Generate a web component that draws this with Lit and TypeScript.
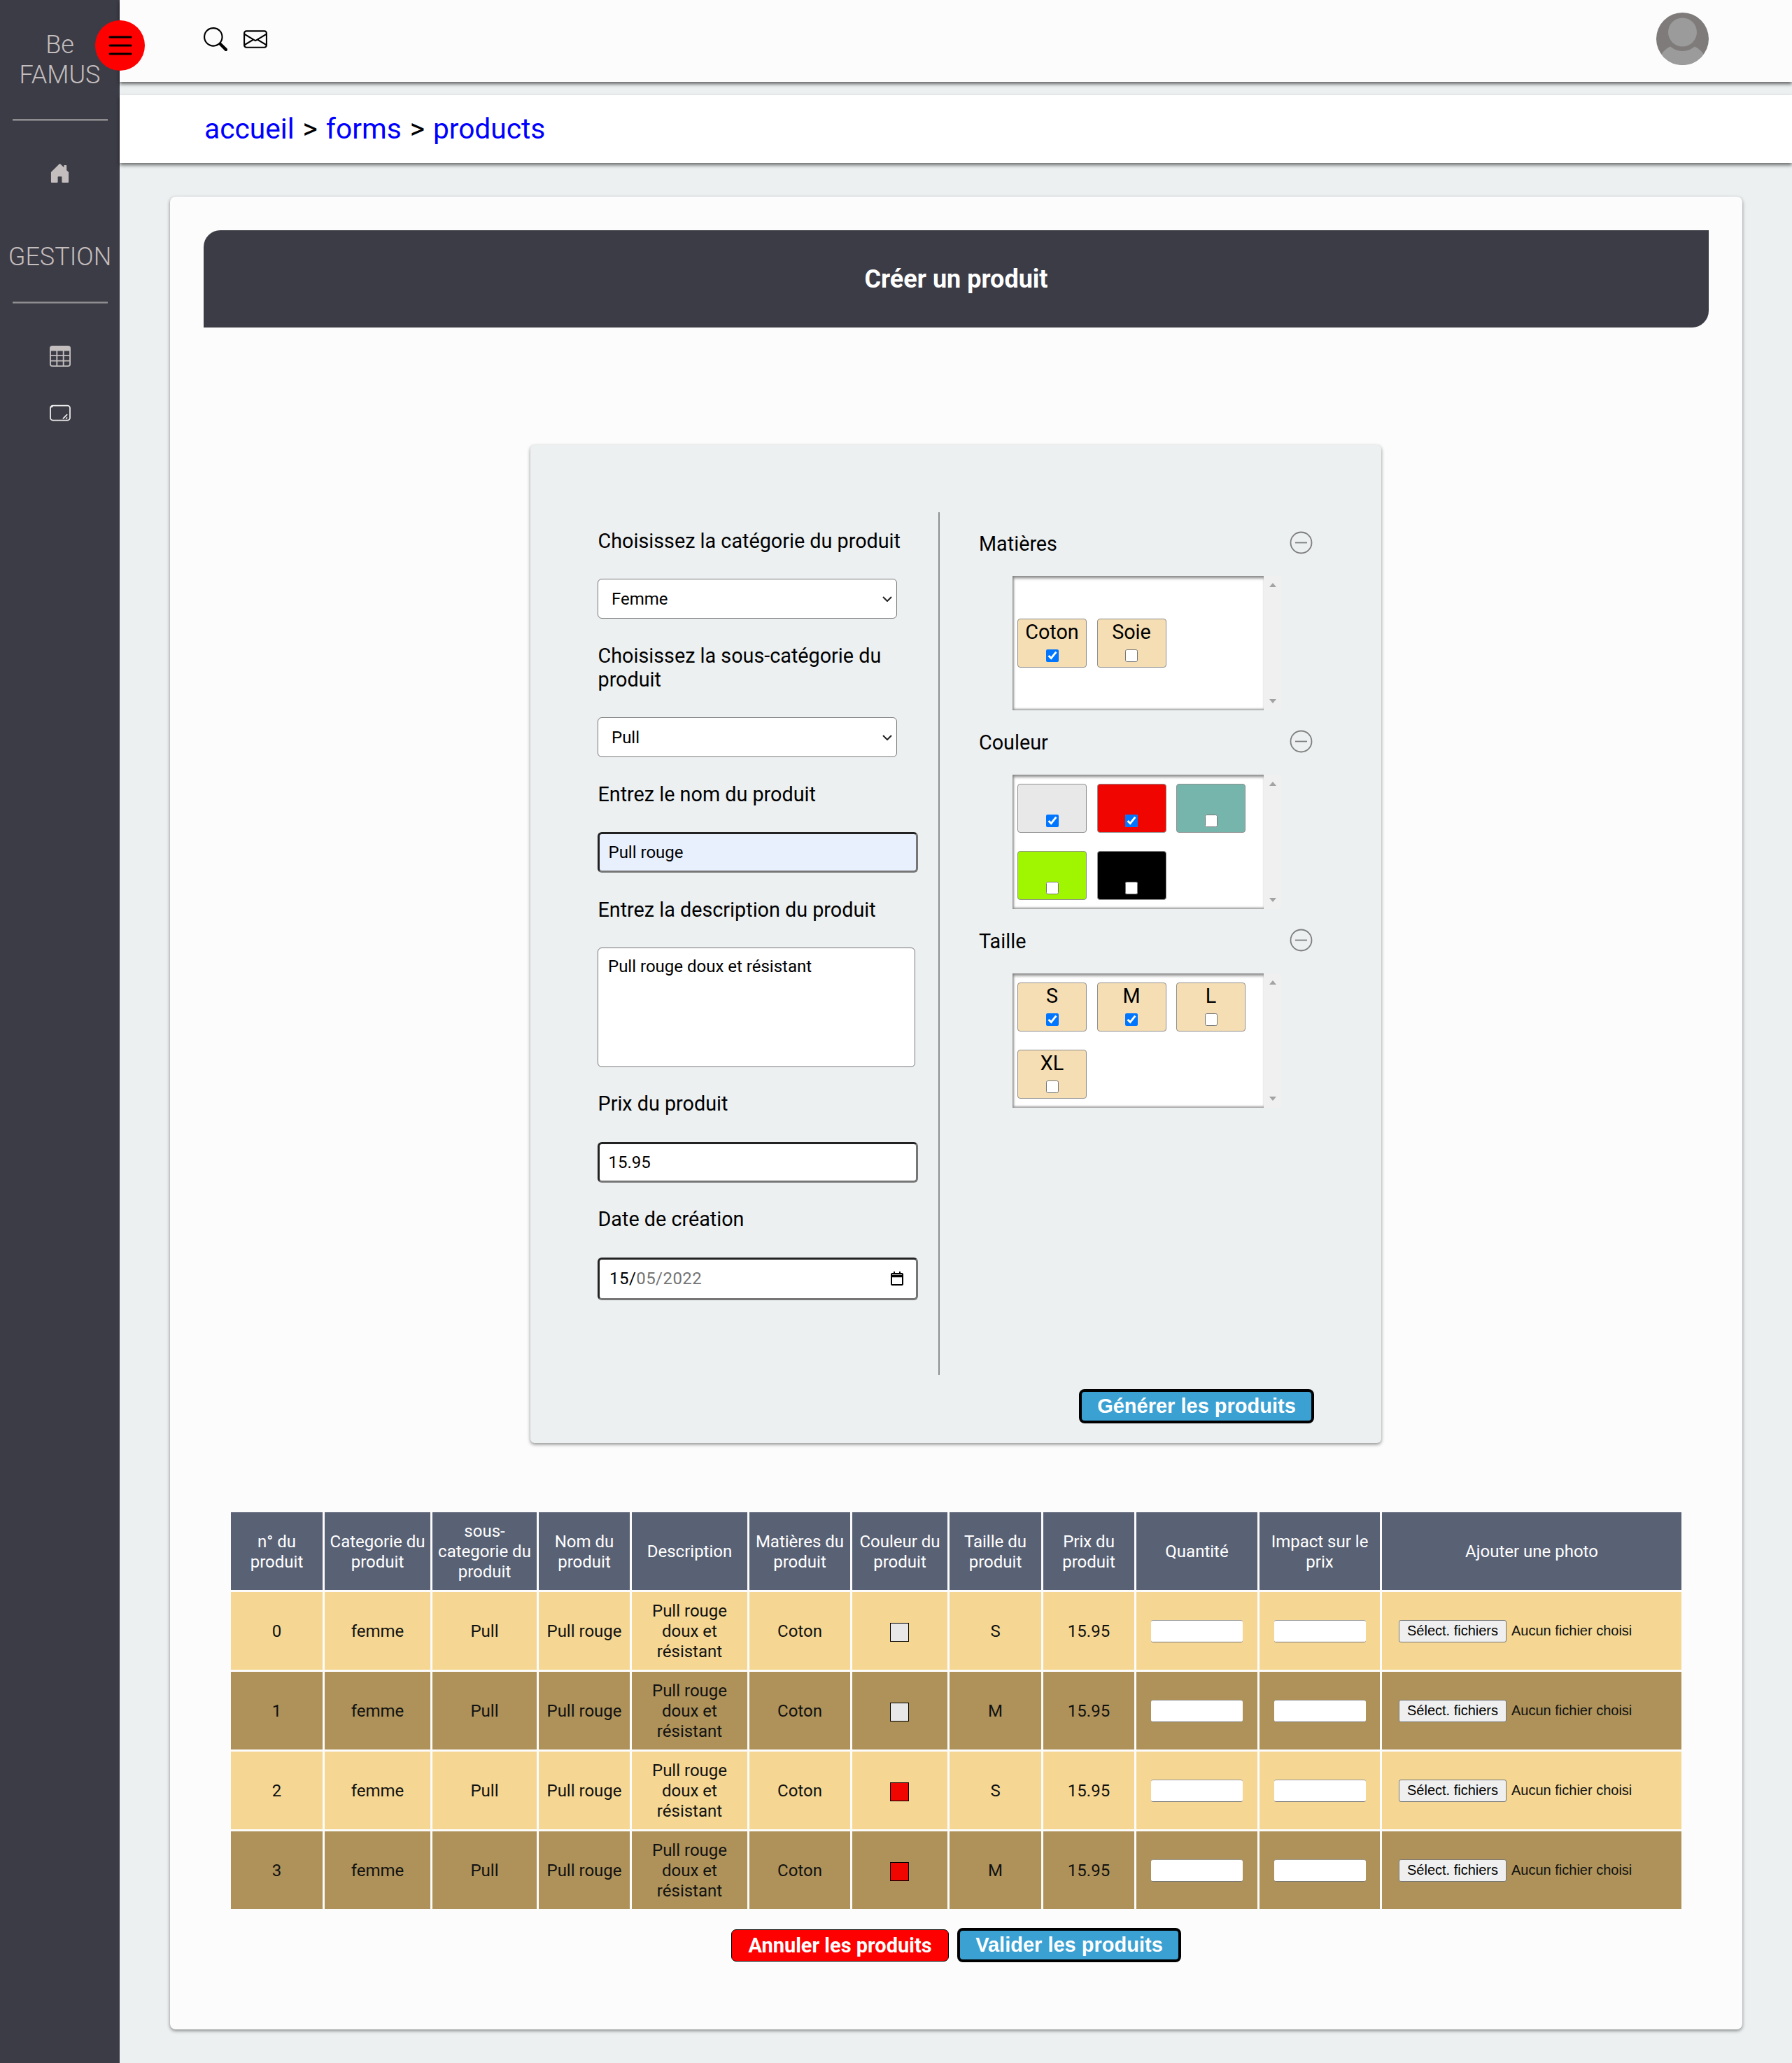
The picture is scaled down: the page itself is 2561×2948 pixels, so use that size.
import { LitElement, html, css, svg } from 'lit';
import { customElement } from 'lit/decorators.js';

interface Tile {
  label?: string;
  color?: string;
  checked?: boolean;
}

const MATIERES: Tile[] = [{ label: 'Coton', checked: true }, { label: 'Soie' }];
const COULEURS: Tile[] = [
  { color: '#e8e8e8', checked: true },
  { color: '#f00500', checked: true },
  { color: '#76b5ac' },
  { color: '#a0f500' },
  { color: '#000000' },
];
const TAILLES: Tile[] = [
  { label: 'S', checked: true },
  { label: 'M', checked: true },
  { label: 'L' },
  { label: 'XL' },
];

const ROWS = [
  { n: 0, color: '#e8e8e8', size: 'S' },
  { n: 1, color: '#e8e8e8', size: 'M' },
  { n: 2, color: '#f00500', size: 'S' },
  { n: 3, color: '#f00500', size: 'M' },
];

const HEADERS = [
  'n° du produit',
  'Categorie du produit',
  'sous-categorie du produit',
  'Nom du produit',
  'Description',
  'Matières du produit',
  'Couleur du produit',
  'Taille du produit',
  'Prix du produit',
  'Quantité',
  'Impact sur le prix',
  'Ajouter une photo',
];

const icon = (path: ReturnType<typeof svg>, w: number, h: number, box = '0 0 16 16') => html`
  <svg width=${w} height=${h} viewBox=${box} fill="currentColor">${path}</svg>
`;

const SEARCH = svg`<path d="M11.742 10.344a6.5 6.5 0 1 0-1.397 1.398h-.001c.03.04.062.078.098.115l3.85 3.85a1 1 0 0 0 1.415-1.414l-3.85-3.85a1.007 1.007 0 0 0-.115-.1zM12 6.5a5.5 5.5 0 1 1-11 0 5.5 5.5 0 0 1 11 0z"/>`;
const ENVELOPE = svg`<path d="M0 4a2 2 0 0 1 2-2h12a2 2 0 0 1 2 2v8a2 2 0 0 1-2 2H2a2 2 0 0 1-2-2V4Zm2-1a1 1 0 0 0-1 1v.217l7 4.2 7-4.2V4a1 1 0 0 0-1-1H2Zm13 2.383-4.708 2.825L15 11.105V5.383Zm-.034 6.876-5.64-3.471L8 9.583l-1.326-.795-5.64 3.47A1 1 0 0 0 2 13h12a1 1 0 0 0 .966-.741ZM1 11.105l4.708-2.897L1 5.383v5.722Z"/>`;
const LIST = svg`<path d="M2.5 12a.5.5 0 0 1 .5-.5h10a.5.5 0 0 1 0 1H3a.5.5 0 0 1-.5-.5zm0-4a.5.5 0 0 1 .5-.5h10a.5.5 0 0 1 0 1H3a.5.5 0 0 1-.5-.5zm0-4a.5.5 0 0 1 .5-.5h10a.5.5 0 0 1 0 1H3a.5.5 0 0 1-.5-.5z"/>`;
const HOUSE = svg`<path d="M6.5 14.5v-3.505c0-.245.25-.495.5-.495h2c.25 0 .5.25.5.5v3.5a.5.5 0 0 0 .5.5h4a.5.5 0 0 0 .5-.5v-7a.5.5 0 0 0-.146-.354L13 5.793V2.5a.5.5 0 0 0-.5-.5h-1a.5.5 0 0 0-.5.5v1.293L8.354 1.146a.5.5 0 0 0-.708 0l-6 6A.5.5 0 0 0 1.5 7.5v7a.5.5 0 0 0 .5.5h4a.5.5 0 0 0 .5-.5z"/>`;
const TABLE = svg`<path d="M0 2a2 2 0 0 1 2-2h12a2 2 0 0 1 2 2v12a2 2 0 0 1-2 2H2a2 2 0 0 1-2-2V2zm15 2h-4v3h4V4zm0 4h-4v3h4V8zm0 4h-4v3h3a1 1 0 0 0 1-1v-2zm-5 3v-3H6v3h4zm-5 0v-3H1v2a1 1 0 0 0 1 1h3zm-4-4h4V8H1v3zm0-4h4V4H1v3zm5-3v3h4V4H6zm4 4H6v3h4V8z"/>`;
const RESIZE = svg`<path d="M.5 4A2.5 2.5 0 0 1 3 1.5h12A2.5 2.5 0 0 1 17.5 4v8a2.5 2.5 0 0 1-2.5 2.5H3A2.5 2.5 0 0 1 .5 12V4zm2.5-.5A1.5 1.5 0 0 0 1.5 4v8A1.5 1.5 0 0 0 3 13.5h12a1.5 1.5 0 0 0 1.5-1.5V4A1.5 1.5 0 0 0 15 2.5H3zm11.854 5.646a.5.5 0 0 1 0 .708l-3 3a.5.5 0 0 1-.708-.708l3-3a.5.5 0 0 1 .708 0zm0 2.5a.5.5 0 0 1 0 .708l-.5.5a.5.5 0 0 1-.708-.708l.5-.5a.5.5 0 0 1 .708 0z"/>`;

@customElement('app-root')
export class AppRoot extends LitElement {
  static styles = css`
    :host {
      display: block;
      min-height: 2948px;
      background: #ecf0f1;
      font-family: Roboto, sans-serif;
      color: #000;
    }

    .page {
      display: grid;
      grid-template-columns: 171px 1fr;
      min-height: 2948px;
      position: relative;
    }

    /* sidebar */
    .sidebar {
      background: #3c3c46;
      color: #c4bebe;
      display: flex;
      flex-direction: column;
      align-items: center;
      font-weight: 300;
      font-size: 36px;
      line-height: 43px;
      text-align: center;
    }
    .brand {
      margin-top: 43px;
    }
    .sidebar hr {
      width: 136px;
      height: 0;
      margin: 0;
      border: 0;
      border-top: 2px solid #8f8d8f;
      border-bottom: 1px solid #6b6a70;
    }
    .hr-top {
      margin-top: 41px !important;
    }
    .home {
      margin-top: 56.5px;
      height: 31px;
    }
    .gestion {
      margin-top: 85px;
    }
    .hr-bottom {
      margin-top: 42px !important;
    }
    .grid-icon {
      margin-top: 57px;
      height: 30px;
    }
    .resize-icon {
      margin-top: 50px;
      color: #efefef;
    }

    .burger {
      position: absolute;
      left: 136px;
      top: 29px;
      width: 71px;
      height: 72px;
      border-radius: 50%;
      background: #ff0000;
      display: flex;
      align-items: center;
      justify-content: center;
      color: #000;
      z-index: 2;
    }

    /* top bars */
    .topbar {
      height: 117px;
      background: #fcfcfc;
      box-shadow: 0 3px 5px rgba(0, 0, 0, 0.6);
      display: flex;
      align-items: center;
      padding: 0 119px 0 120px;
      position: relative;
    }
    .topbar .tools {
      display: flex;
      align-items: center;
      gap: 23px;
      margin-top: -5px;
      flex: 1;
    }
    .topbar svg {
      display: block;
    }
    .avatar {
      width: 75px;
      height: 75px;
      margin-top: -7px;
    }
    .crumbs {
      margin-top: 19px;
      height: 97px;
      background: #fff;
      box-shadow: 0 3px 5px rgba(0, 0, 0, 0.55);
      display: flex;
      align-items: center;
      gap: 12px;
      padding-left: 121px;
      font-size: 40.7px;
      padding-bottom: 2px;
      box-sizing: border-box;
    }
    .crumbs a {
      color: #0000ff;
      text-decoration: none;
    }

    /* card */
    .card {
      margin: 48px 71px 48px 72px;
      height: 2619px;
      box-sizing: border-box;
      background: #fcfcfc;
      border-radius: 8px;
      box-shadow: 0 2px 5px rgba(0, 0, 0, 0.45);
      padding: 48px 48px 0;
    }
    .title {
      height: 139px;
      background: #3c3c46;
      border-radius: 24px 0 24px 0;
      color: #fff;
      font-size: 36px;
      font-weight: 700;
      display: flex;
      align-items: center;
      justify-content: center;
    }

    /* form panel */
    .panel {
      width: 1216px;
      height: 1426px;
      margin: 168px 0 0 467px;
      background: #ecf0f1;
      border-radius: 6px;
      box-shadow: 0 2px 5px rgba(0, 0, 0, 0.45);
      padding-top: 96px;
      box-sizing: border-box;
    }
    .columns {
      display: grid;
      grid-template-columns: 584.5px 1fr;
      height: 1233px;
    }
    .left {
      border-right: 2px solid #8d8f90;
      padding: 24.5px 0 0 96px;
      display: flex;
      flex-direction: column;
      align-items: flex-start;
      gap: 36.7px;
      box-sizing: border-box;
    }
    .label {
      font-size: 28.75px;
      line-height: 33.6px;
      width: 458px;
      padding-left: 0.5px;
    }
    .select-wrap {
      position: relative;
      width: 428px;
      height: 57.5px;
    }
    .select-wrap svg {
      position: absolute;
      right: 7px;
      top: 25px;
      pointer-events: none;
    }
    select {
      appearance: none;
      display: block;
      width: 100%;
      height: 100%;
      box-sizing: border-box;
      border: 1px solid #767676;
      border-radius: 6px;
      background-color: #fff;
      font: 24px Roboto, sans-serif;
      color: #000;
      padding-left: 19px;
    }
    .field {
      width: 458px;
      height: 58px;
      box-sizing: border-box;
      border: 3px solid;
      border-color: #222 #767676 #767676 #222;
      border-radius: 6px;
      background: #fff;
      font: 24px Roboto, sans-serif;
      color: #000;
      padding: 0 12.5px;
    }
    .field.filled {
      background: #e8f0fe;
    }
    textarea {
      width: 454px;
      height: 170.5px;
      box-sizing: border-box;
      border: 1px solid #767676;
      border-radius: 6px;
      background: #fff;
      font: 24px Roboto, sans-serif;
      color: #000;
      padding: 12px 14px;
      resize: none;
      display: block;
    }
    .date {
      height: 61.5px;
      display: flex;
      align-items: center;
      justify-content: space-between;
      padding: 0 18px 0 14px;
      letter-spacing: 0.45px;
    }
    .date .muted {
      color: #757575;
    }

    .right {
      padding: 27px 0 0 56.5px;
      display: flex;
      flex-direction: column;
      gap: 28.5px;
    }
    .group-head {
      width: 477px;
      height: 34px;
      display: flex;
      align-items: center;
      justify-content: space-between;
      font-size: 28.75px;
    }
    .group-head span {
      padding-top: 2px;
    }
    .group-head svg {
      display: block;
      margin-top: -2px;
    }
    .group-body {
      display: flex;
      width: 384px;
      height: 191.5px;
      margin: 30px 0 0 48px;
    }
    .choices {
      width: 359px;
      box-sizing: border-box;
      background: #fff;
      box-shadow: inset 0 5px 4px -2px #808080, inset 4px 0 3px -2px #909090, inset 0 -4px 3px -2px #a0a0a0;
      display: flex;
      flex-wrap: wrap;
      align-content: space-around;
      column-gap: 14.5px;
      padding: 0 7px;
    }
    .tile {
      width: 99px;
      height: 70px;
      box-sizing: border-box;
      background: #f5deb3;
      border: 1px solid #8f8f8f;
      border-radius: 4px;
      font-size: 28.75px;
      display: flex;
      flex-direction: column;
      align-items: center;
      position: relative;
      line-height: 36px;
    }
    .tile input {
      width: 18px;
      height: 18px;
      margin: 0;
      position: absolute;
      top: 43px;
      left: 50%;
      transform: translateX(-50%);
    }
    .scroll {
      width: 25px;
      background: #f0f0f0;
      display: flex;
      flex-direction: column;
      justify-content: space-between;
      align-items: center;
      padding: 10px 0;
      box-sizing: border-box;
    }
    .arrow {
      width: 0;
      height: 0;
      border-left: 5.5px solid transparent;
      border-right: 5.5px solid transparent;
    }
    .arrow.up {
      border-bottom: 6px solid #a3a3a3;
    }
    .arrow.down {
      border-top: 6px solid #a3a3a3;
    }

    .blue-btn,
    .red-btn {
      box-sizing: border-box;
      font: 700 29px 'Liberation Sans', Arial, sans-serif;
      color: #fff;
      background: #3ba1d3;
      border: 4px solid #000;
      border-radius: 8px;
      padding: 0;
      display: block;
    }
    .red-btn {
      font-family: Roboto, sans-serif;
      background: #ff0000;
      border-width: 1.5px;
      border-radius: 7px;
    }
    .generate {
      width: 336px;
      height: 49px;
      margin: 20px 96px 0 auto;
    }

    /* products table */
    table {
      border-collapse: separate;
      border-spacing: 3px;
      table-layout: fixed;
      width: 2079px;
      margin: 96px 0 0 36px;
      font-size: 24px;
      line-height: 29px;
    }
    col:nth-child(1) { width: 131px; }
    col:nth-child(2) { width: 151px; }
    col:nth-child(3) { width: 149px; }
    col:nth-child(4) { width: 130px; }
    col:nth-child(5) { width: 165px; }
    col:nth-child(6) { width: 144px; }
    col:nth-child(7) { width: 136px; }
    col:nth-child(8) { width: 131px; }
    col:nth-child(9) { width: 130px; }
    col:nth-child(10) { width: 173px; }
    col:nth-child(11) { width: 172px; }
    col:nth-child(12) { width: 428px; }
    tr {
      height: 111px;
    }
    th {
      background: #596175;
      color: #fff;
      font-weight: 400;
      padding: 2px 5px 0;
    }
    td {
      padding: 2px 5px 0;
      text-align: center;
      background: #f5d793;
      color: #111;
    }
    tr:nth-child(even) td {
      background: #ae9259;
    }
    .swatch {
      display: block;
      width: 27px;
      height: 27px;
      box-sizing: border-box;
      border: 1.5px solid #000;
      margin: 1px 0 0 49px;
    }
    .qty {
      display: block;
      width: 131px;
      height: 32px;
      box-sizing: border-box;
      margin: -2px auto 0;
      background: #fff;
      border: 0;
      border-bottom: 1px solid #767676;
      border-top: 1px solid #999;
      border-radius: 3px;
      padding: 0;
    }
    .file {
      display: flex;
      align-items: center;
      gap: 7px;
      margin-top: -2px;
      padding-left: 19px;
      font: 20px 'Liberation Sans', Arial, sans-serif;
      white-space: nowrap;
    }
    .file button {
      width: 154px;
      height: 32px;
      box-sizing: border-box;
      background: #efefef;
      border: 1px solid #767676;
      border-radius: 3px;
      font: inherit;
      color: #000;
      padding: 0;
    }

    .actions {
      display: flex;
      justify-content: center;
      align-items: center;
      gap: 12px;
      margin-top: 24px;
    }
    .actions .red-btn {
      width: 311px;
      height: 46px;
    }
    .actions .blue-btn {
      width: 320px;
      height: 49px;
    }
  `;

  private renderGroup(title: string, tiles: Tile[]) {
    return html`
      <div class="group">
        <div class="group-head">
          <span>${title}</span>
          <svg width="33" height="33" viewBox="0 0 33 33" fill="none" stroke="#7f7f7f" stroke-width="1.8">
            <circle cx="16.5" cy="16.5" r="15" />
            <path d="M8 16.5h17" />
          </svg>
        </div>
        <div class="group-body">
          <div class="choices">
            ${tiles.map(
              (t) => html`
                <label class="tile" style=${t.color ? `background:${t.color}` : ''}>
                  ${t.label ?? ''}
                  <input type="checkbox" ?checked=${t.checked} />
                </label>
              `
            )}
          </div>
          <div class="scroll"><span class="arrow up"></span><span class="arrow down"></span></div>
        </div>
      </div>
    `;
  }

  private renderSelect(value: string) {
    return html`
      <div class="select-wrap">
        <select><option>${value}</option></select>
        <svg width="14" height="8" viewBox="0 0 14 8" fill="none" stroke="#222" stroke-width="2">
          <path d="M1 1l6 6 6-6" />
        </svg>
      </div>
    `;
  }

  render() {
    return html`
      <div class="page">
        <nav class="sidebar">
          <div class="brand">Be<br />FAMUS</div>
          <hr class="hr-top" />
          <div class="home">${icon(HOUSE, 31, 31)}</div>
          <div class="gestion">GESTION</div>
          <hr class="hr-bottom" />
          <div class="grid-icon">${icon(TABLE, 30, 30)}</div>
          <div class="resize-icon">${icon(RESIZE, 32, 28, '0 0 18 16')}</div>
        </nav>
        <div class="burger">${icon(LIST, 48, 48)}</div>

        <main>
          <header class="topbar">
            <div class="tools">${icon(SEARCH, 34, 34)} ${icon(ENVELOPE, 34, 34)}</div>
            <svg class="avatar" viewBox="0 0 75 75">
              <defs><clipPath id="disc"><circle cx="37.5" cy="37.5" r="37.5" /></clipPath></defs>
              <g clip-path="url(#disc)">
                <rect width="75" height="75" fill="#7f7b7a" />
                <circle cx="37.5" cy="82" r="38" fill="#9b9b9b" />
                <circle cx="37.5" cy="28" r="27" fill="#7f7b7a" />
                <circle cx="37.5" cy="28" r="20.5" fill="#9b9b9b" />
              </g>
            </svg>
          </header>
          <div class="crumbs">
            <a href="#">accueil</a><span>&gt;</span><a href="#">forms</a><span>&gt;</span><a href="#">products</a>
          </div>

          <section class="card">
            <div class="title">Créer un produit</div>

            <div class="panel">
              <div class="columns">
                <div class="left">
                  <div class="label">Choisissez la catégorie du produit</div>
                  ${this.renderSelect('Femme')}
                  <div class="label">Choisissez la sous-catégorie du produit</div>
                  ${this.renderSelect('Pull')}
                  <div class="label">Entrez le nom du produit</div>
                  <input class="field filled" value="Pull rouge" />
                  <div class="label">Entrez la description du produit</div>
                  <textarea .value=${'Pull rouge doux et résistant'}></textarea>
                  <div class="label">Prix du produit</div>
                  <input class="field" value="15.95" />
                  <div class="label">Date de création</div>
                  <div class="field date">
                    <span>15/<span class="muted">05/2022</span></span>
                    <svg width="18" height="20" viewBox="0 0 18 20" fill="none" stroke="#000" stroke-width="2">
                      <rect x="1" y="3" width="16" height="16" rx="1" />
                      <path d="M1 6.5h16" stroke-width="3.5" />
                      <path d="M5 0v3M13 0v3" />
                    </svg>
                  </div>
                </div>
                <div class="right">
                  ${this.renderGroup('Matières', MATIERES)}
                  ${this.renderGroup('Couleur', COULEURS)}
                  ${this.renderGroup('Taille', TAILLES)}
                </div>
              </div>
              <button class="blue-btn generate">Générer les produits</button>
            </div>

            <table>
              <colgroup>${HEADERS.map(() => html`<col />`)}</colgroup>
              <thead>
                <tr>${HEADERS.map((h) => html`<th>${h}</th>`)}</tr>
              </thead>
              <tbody>
                ${ROWS.map(
                  (r) => html`
                    <tr>
                      <td>${r.n}</td>
                      <td>femme</td>
                      <td>Pull</td>
                      <td>Pull rouge</td>
                      <td>Pull rouge doux et résistant</td>
                      <td>Coton</td>
                      <td><span class="swatch" style="background:${r.color}"></span></td>
                      <td>${r.size}</td>
                      <td>15.95</td>
                      <td><input class="qty" /></td>
                      <td><input class="qty" /></td>
                      <td>
                        <div class="file"><button>Sélect. fichiers</button><span>Aucun fichier choisi</span></div>
                      </td>
                    </tr>
                  `
                )}
              </tbody>
            </table>

            <div class="actions">
              <button class="red-btn">Annuler les produits</button>
              <button class="blue-btn">Valider les produits</button>
            </div>
          </section>
        </main>
      </div>
    `;
  }
}
